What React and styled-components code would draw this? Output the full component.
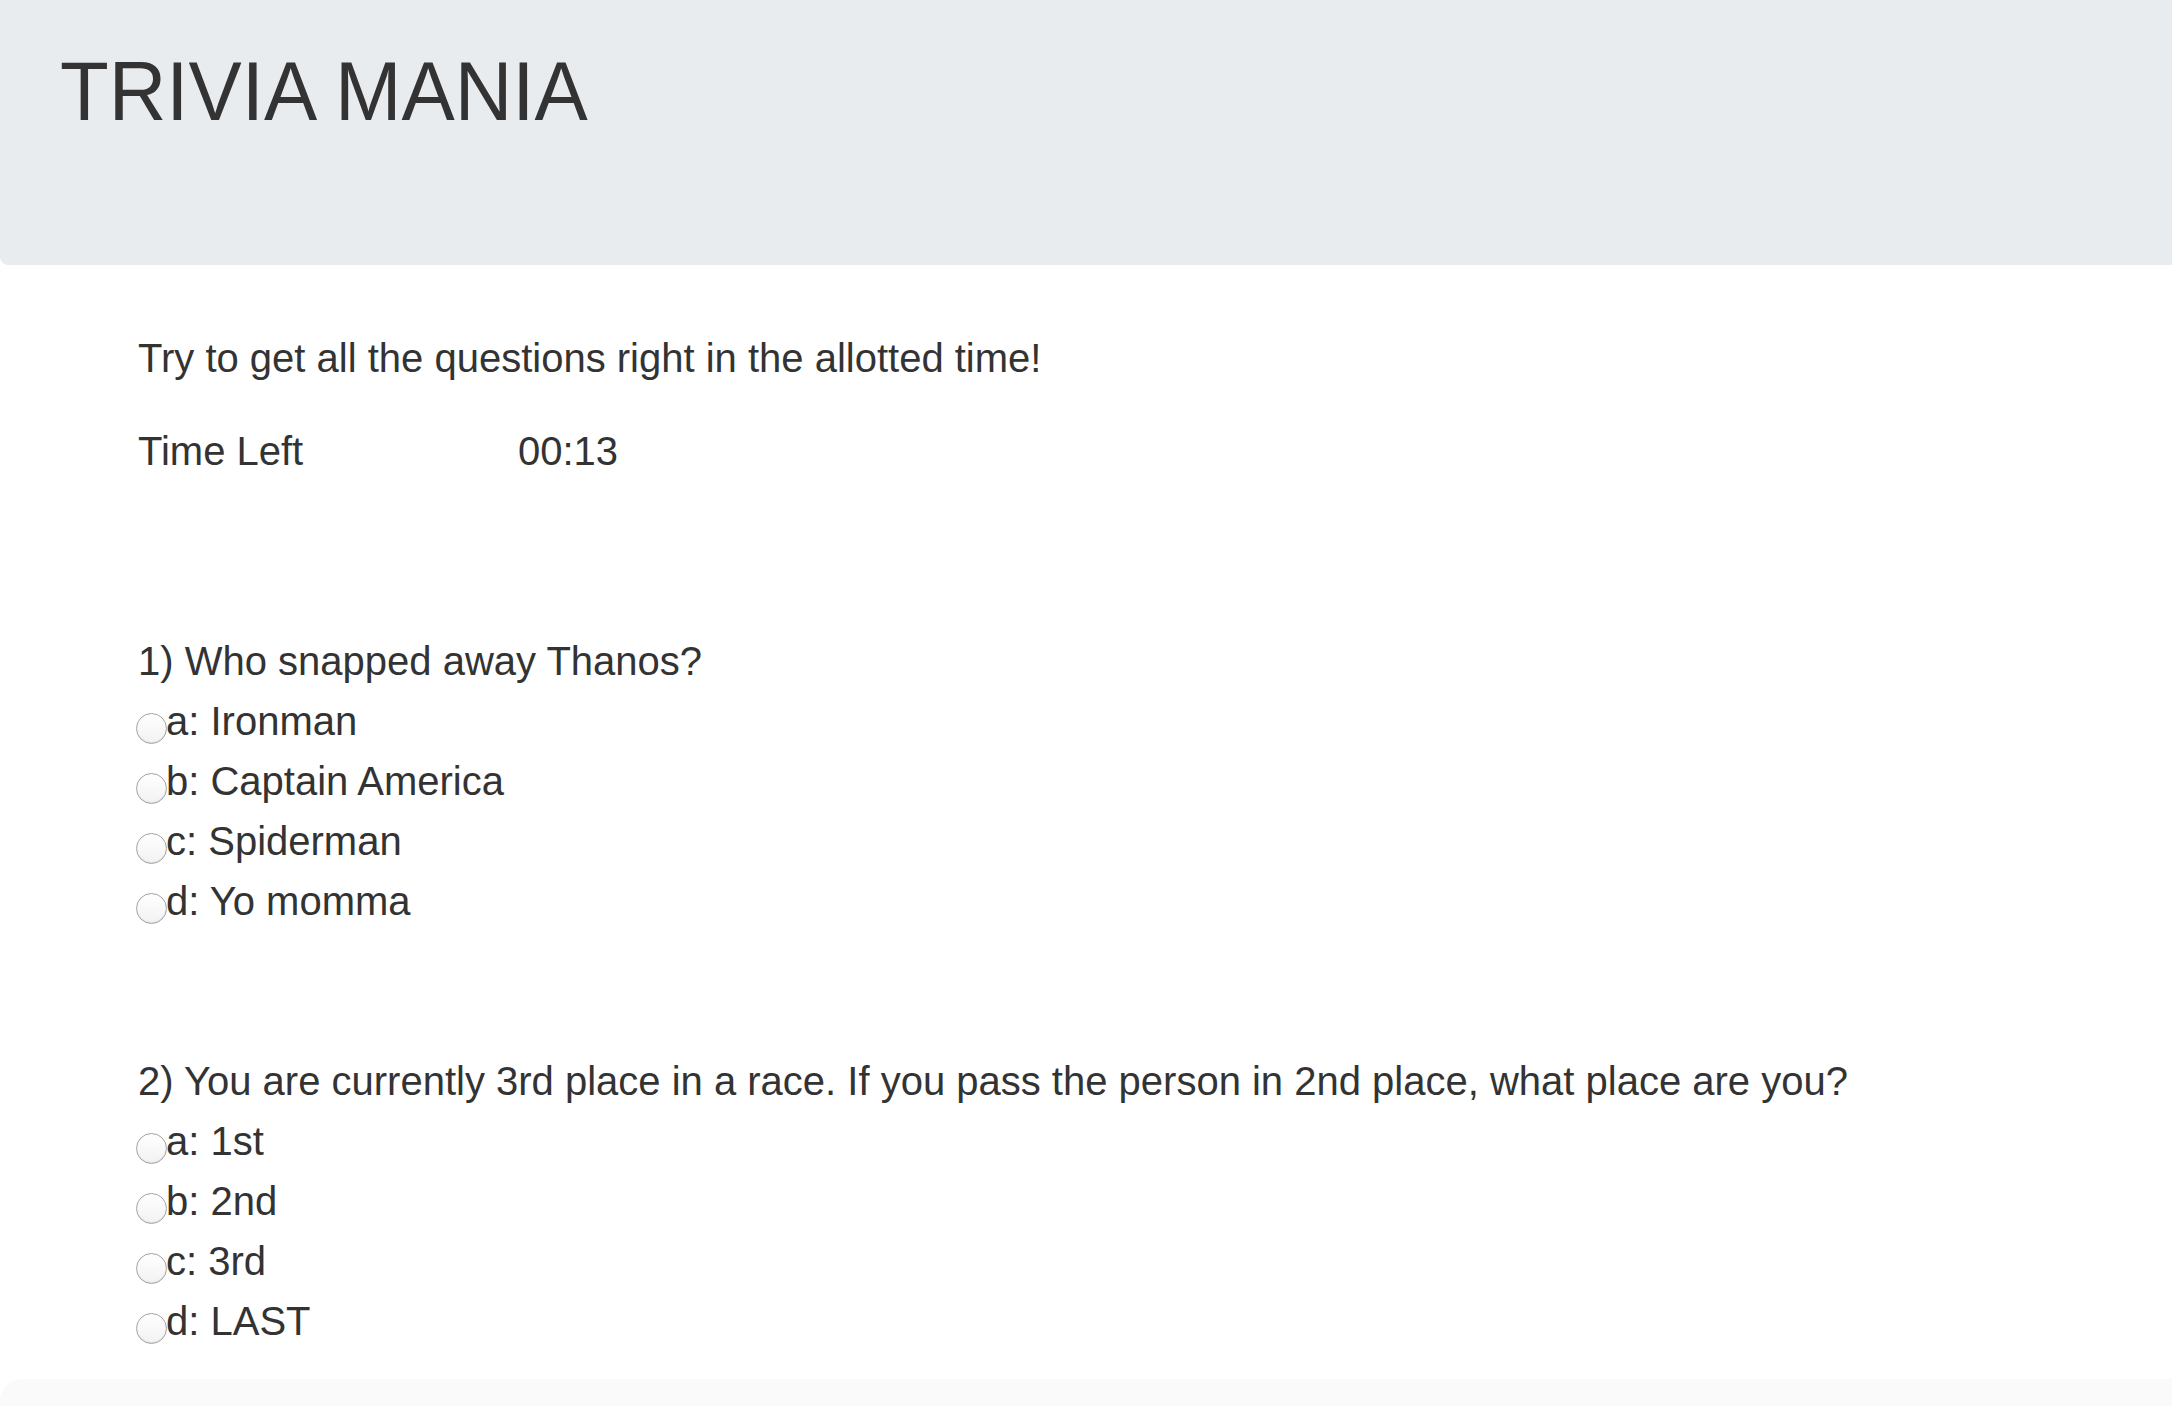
import React from "react";
import styled, { createGlobalStyle } from "styled-components";

const GlobalStyle = createGlobalStyle`
  html, body {
    margin: 0;
    padding: 0;
    background: #ffffff;
  }
  body {
    font-family: "Liberation Sans", Arial, Helvetica, sans-serif;
    color: #333333;
  }
  * { box-sizing: border-box; }
`;

const Page = styled.div`
  min-height: 1406px;
  display: flex;
  flex-direction: column;
`;

const Jumbotron = styled.header`
  background: #e9ecef;
  height: 265px;
  padding: 49px 0 0 60px;
  border-bottom-left-radius: 8px;
`;

const Title = styled.h1`
  margin: 0;
  font-size: 84px;
  line-height: 84px;
  font-weight: 400;
  color: #333333;
  display: inline-block;
  transform: scaleX(0.95);
  transform-origin: left center;
  white-space: nowrap;
`;

const Main = styled.main`
  padding: 63px 0 0 138px;
  font-size: 40px;
  line-height: 60px;
  color: #333333;
`;

const Intro = styled.p`
  margin: 0 0 33px 0;
`;

const TimerRow = styled.div`
  display: grid;
  grid-template-columns: 380px auto;
`;

const Quiz = styled.form`
  display: flex;
  flex-direction: column;
  gap: 120px;
  margin-top: 150px;
`;

const QuestionBlock = styled.div`
  display: flex;
  flex-direction: column;
`;

const QuestionText = styled.div``;

const Option = styled.label`
  display: flex;
  align-items: center;
  height: 60px;
  cursor: pointer;
`;

const Radio = styled.input.attrs({ type: "radio" })`
  appearance: none;
  -webkit-appearance: none;
  width: 31px;
  height: 31px;
  margin: 14px -1px 0 -2px;
  border-radius: 50%;
  border: 1.5px solid #a4a4a4;
  background: linear-gradient(#ffffff, #f2f2f2);
  box-shadow: inset 0 -1px 1px rgba(0, 0, 0, 0.08);
  flex: none;
`;

const Footer = styled.footer`
  margin-top: 28px;
  flex: 1;
  background: #fafafa;
  border-top-left-radius: 22px;
`;

const questions = [
  {
    q: "1) Who snapped away Thanos?",
    name: "q1",
    options: ["a: Ironman", "b: Captain America", "c: Spiderman", "d: Yo momma"],
  },
  {
    q: "2) You are currently 3rd place in a race. If you pass the person in 2nd place, what place are you?",
    name: "q2",
    options: ["a: 1st", "b: 2nd", "c: 3rd", "d: LAST"],
  },
];

export default function App() {
  return (
    <Page>
      <GlobalStyle />
      <Jumbotron>
        <Title>TRIVIA MANIA</Title>
      </Jumbotron>
      <Main>
        <Intro>Try to get all the questions right in the allotted time!</Intro>
        <TimerRow>
          <span>Time Left</span>
          <span>00:13</span>
        </TimerRow>
        <Quiz>
          {questions.map((item) => (
            <QuestionBlock key={item.name}>
              <QuestionText>{item.q}</QuestionText>
              {item.options.map((opt) => (
                <Option key={opt}>
                  <Radio name={item.name} />
                  {opt}
                </Option>
              ))}
            </QuestionBlock>
          ))}
        </Quiz>
      </Main>
      <Footer />
    </Page>
  );
}
